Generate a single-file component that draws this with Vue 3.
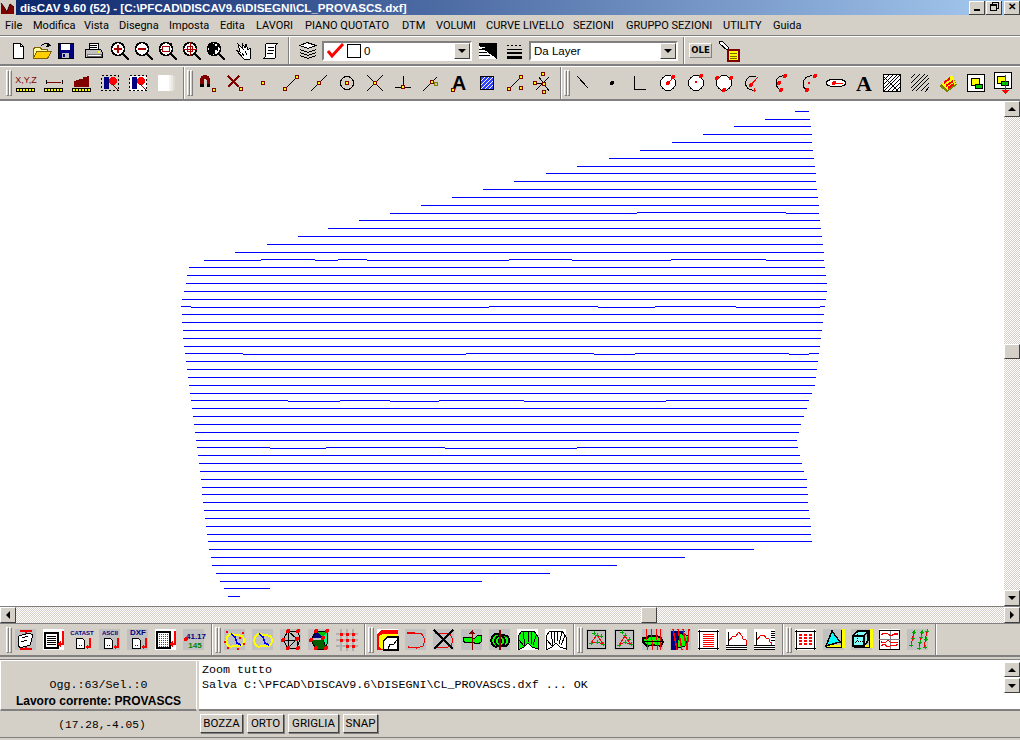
<template>
  <div class="app">
    <div class="titlebar">
      <svg class="logo" viewBox="0 0 16 15" v-html="logo"></svg>
      <span class="title">disCAV 9.60 (52) - [C:\PFCAD\DISCAV9.6\DISEGNI\CL_PROVASCS.dxf]</span>
      <div class="winbtns">
        <span class="winbtn"><i class="w-min"></i></span>
        <span class="winbtn"><i class="w-res"></i></span>
        <span class="winbtn close">✕</span>
      </div>
    </div>

    <div class="menubar">
      <span v-for="m in menu" :key="m">{{ m }}</span>
    </div>
    <div class="rule"></div>

    <div class="band band1">
      <div class="group g-file">
        <span v-for="b in band1a" :key="b.i" class="btn24" :class="b.c"><svg viewBox="0 0 24 24" v-html="icons[b.i]"></svg></span>
      </div>
      <div class="group g-layer">
        <span class="btn24"><svg viewBox="0 0 24 24" v-html="icons.layers"></svg></span>
        <div class="combo c-layer">
          <svg class="check" viewBox="0 0 20 16"><path d="M2 8l4 5L17 1" fill="none" stroke="#f00" stroke-width="3"/></svg>
          <span class="swatch"></span>
          <span class="combo-text">0</span>
          <span class="drop"><i></i></span>
        </div>
        <span class="btn24 next"><svg viewBox="0 0 24 24" v-html="icons.ltype"></svg></span>
        <span class="btn24 tight"><svg viewBox="0 0 24 24" v-html="icons.lwidth"></svg></span>
        <div class="combo c-type">
          <span class="combo-text">Da Layer</span>
          <span class="drop"><i></i></span>
        </div>
      </div>
      <div class="group g-ole">
        <span class="ole">OLE</span>
        <span class="btn24"><svg viewBox="0 0 24 24" v-html="icons.pin"></svg></span>
      </div>
    </div>
    <div class="rule"></div>

    <div class="band band2">
      <div v-for="(g, n) in band2" :key="n" class="group tools">
        <span class="grip"></span><span class="grip"></span>
        <span v-for="i in g" :key="i" class="btn28"><svg viewBox="0 0 24 24" v-html="icons[i]"></svg></span>
      </div>
    </div>

    <div class="work">
      <svg class="canvas" viewBox="0 101 1004 505">
        <rect v-for="(s, n) in segments" :key="n" :x="s[1]" :y="s[0]" :width="s[2] - s[1]" height="1" fill="#0000ff"/>
      </svg>
      <div class="vscroll">
        <span class="sbtn"><i class="up"></i></span>
        <span class="vthumb"></span>
        <span class="sbtn"><i class="down"></i></span>
      </div>
    </div>

    <div class="hscroll">
      <span class="sbtn"><i class="left"></i></span>
      <span class="hthumb"></span>
      <span class="sbtn"><i class="right"></i></span>
    </div>

    <div class="band band3">
      <div v-for="(g, n) in band3" :key="n" class="group tools">
        <span class="grip"></span><span class="grip"></span>
        <span v-for="i in g" :key="i" class="btn28"><svg viewBox="0 0 24 24" v-html="icons[i]"></svg></span>
      </div>
    </div>
    <div class="rule low"></div>

    <div class="status">
      <div class="info">
        <div class="mono">Ogg.:63/Sel.:0</div>
        <div class="job">Lavoro corrente: PROVASCS</div>
      </div>
      <div class="log">
        <div class="mono">Zoom tutto</div>
        <div class="mono">Salva C:\PFCAD\DISCAV9.6\DISEGNI\CL_PROVASCS.dxf ... OK</div>
        <div class="logscroll">
          <span class="sbtn"><i class="up"></i></span>
          <span class="sbtn"><i class="down"></i></span>
        </div>
      </div>
    </div>

    <div class="bottom">
      <div class="coord mono">(17.28,-4.05)</div>
      <div class="modes">
        <span v-for="b in modes" :key="b" class="mode">{{ b }}</span>
      </div>
    </div>
  </div>
</template>

<script setup>
const menu = ['File', 'Modifica', 'Vista', 'Disegna', 'Imposta', 'Edita', 'LAVORI', 'PIANO QUOTATO', 'DTM', 'VOLUMI', 'CURVE LIVELLO', 'SEZIONI', 'GRUPPO SEZIONI', 'UTILITY', 'Guida']
const modes = ['BOZZA', 'ORTO', 'GRIGLIA', 'SNAP']

const band1a = [
  { i: 'new' }, { i: 'open' }, { i: 'save' }, { i: 'print', c: 'm4' },
  { i: 'zin', c: 'm2' }, { i: 'zout' }, { i: 'zwin' }, { i: 'zall' }, { i: 'zprev' },
  { i: 'hand', c: 'm4' }, { i: 'scroll', c: 'm3' }
]

const band2 = [
  ['xyz', 'dist', 'area', 'sel1', 'sel2', 'fade'],
  ['magnet', 'snapx', 'snapdot', 'snapline', 'snapmid', 'snapcen', 'snapint', 'snapperp', 'snaptan', 'snaptext', 'snaphatch', 'snaptwo', 'snapmulti'],
  ['line', 'point', 'angle', 'c1', 'c2', 'c3', 'a1', 'a2', 'a3', 'ell', 'text', 'hatch', 'diag', 'solid', 'ins', 'insdown']
]

const band3 = [
  ['t1', 't2', 'catast', 'ascii', 'dxf', 't6', 'num'],
  ['b1', 'b2', 'tri1', 'tri2', 'gridd'],
  ['cont', 'cv1', 'cv2', 'gr1', 'gr2', 'gr3', 'gr4'],
  ['fr1', 'fr2', 'sec1', 'sec2', 'sec3', 'prof1', 'prof2'],
  ['fr3', 'vol1', 'vol2', 'vol3', 'vol4']
]

const dot = (x, y, r = 2) => `<circle cx="${x}" cy="${y}" r="${r}" fill="#ff0" stroke="#800000"/>`
const rd = (x, y, r = 2) => `<circle cx="${x}" cy="${y}" r="${r}" fill="#f00"/>`
const gn = (x, y) => `<path d="M${x - 2} ${y}h4M${x} ${y - 2}v4" stroke="#0a0" fill="none"/>`
const ln = (d, c = '#000', w = 1) => `<path d="${d}" fill="none" stroke="${c}" stroke-width="${w}"/>`
const grey = '<rect x="1" y="1" width="21" height="21" fill="#c0c0c0"/>'
const white = '<rect x="1" y="1" width="21" height="21" fill="#fff"/>'
const ruler = '<rect x="2.5" y="17.5" width="18" height="3" fill="#ff0" stroke="#000"/>' + ln('M5 18v2M8 18v2M11 18v2M14 18v2M17 18v2')
const cornerRuler = '<path d="M21 1v17H4" fill="none" stroke="#ff0" stroke-width="3"/>' + ln('M19.5 2v17.5H4')
const mag = inner => '<circle cx="10" cy="10" r="6.5" fill="#fff" stroke="#000" stroke-width="1.5"/>' + ln('M15 15l6 6', '#000', 2.5) + inner
const tdoc = (l, cc, bg = '') => bg + `<text x="12" y="7" text-anchor="middle" font-family="Liberation Sans, sans-serif" font-weight="700" font-size="${l.length > 4 ? 6 : 8}" fill="${cc}">${l}</text>` +
  '<path d="M6.5 10.5h6l2 2v8h-8z" fill="#fff" stroke="#000"/>' + '<path d="M9 17h1M11 17h1" stroke="#00f"/>' + ln('M20 10v9h-3', '#f00', 1.5) + '<path d="M15 19l3-3v6z" fill="#f00"/>'
const frame = ln('M2.5 3.5h18v17h-18z', '#000', 1.5) + ln('M1 3.5h3M1 20.5h3M19 3.5h3M19 20.5h3M2.5 2v3M2.5 19v3M20.5 2v3M20.5 19v3')
const blob = 'M4 9c2-4 6-3 8-2s6-1 8 2 1 8-2 9-5-1-7 0-6 1-7-2-1-4 0-7z'

const logo = '<rect width="16" height="15" fill="#d4d0c8"/><path d="M1 14V3l3 4 3 5 3-8 4 3v7z" fill="#800000"/><path d="M1 3l3 4 3 5 3-8 4 3" fill="none" stroke="#300"/>'

const icons = {
  new: '<path d="M7.5 4.5h7l3 3v12h-10z" fill="#fff" stroke="#000"/>' + ln('M14.5 4.5v3h3'),
  open: '<path d="M3.5 19.5v-10l2-1h5l1 2h6v2" fill="#ffff9c" stroke="#806000"/><path d="M3.5 19.5l3-7h15l-4 7z" fill="#ffcf00" stroke="#806000"/>' + ln('M11 7c2-3 6-3 8-1') + '<path d="M18 3l3 4-5 1z" fill="#000"/>',
  save: '<rect x="4" y="4" width="15" height="15" fill="#000080" stroke="#000"/><rect x="7" y="5" width="9" height="6" fill="#fff"/><rect x="8" y="14" width="7" height="5" fill="#c0c0c0"/><rect x="9" y="15" width="2" height="3" fill="#000080"/>',
  print: '<path d="M7.5 4.5h9v6h-9z" fill="#fff" stroke="#000"/><path d="M3.5 10.5h15l2 3v5h-17z" fill="#c0c0c0" stroke="#000"/><rect x="5" y="15" width="14" height="2" fill="#fff" stroke="#000" stroke-width=".5"/><rect x="16" y="12" width="2" height="2" fill="#ff0"/>' + ln('M8 6.5h7M8 8.5h7'),
  zin: mag(ln('M6 10h8M10 6v8', '#a00', 2)),
  zout: mag(ln('M6 10h8', '#a00', 2)),
  zwin: mag(`<rect x="6.5" y="7.5" width="7" height="5" fill="none" stroke="#a00"/>` + ln('M4 10h2M13 5l3-1', '#000')),
  zall: mag(ln('M3 10h14M10 3v14', '#a00') + '<circle cx="10" cy="10" r="3" fill="none" stroke="#a00"/>'),
  zprev: mag('<path d="M4.500 10a5.500 5.500 0 0 1 6-5.500v11a5.500 5.500 0 0 1-6-5.500z" fill="#000"/><path d="M9 9l6-4-1 7z" fill="#000"/>'),
  hand: '<path d="M6 5l5 5-1-6 3 5 1-4 2 6 2-2 1 5-1 6h-6l-8-9 4 2z" fill="#fff" stroke="#000"/>' + ln('M10 14l2 3M13 12l2 4'),
  scroll: '<path d="M8.500 4.500h10l-2 2v11c0 1-1 2-2 2h-10l2-2v-11c0-1 1-2 2-2z" fill="#fff" stroke="#000"/>' + ln('M9 8h6M9 11h6M8 14h6'),
  layers: '<path d="M4 6.500l7-3 9 3-8 3z" fill="#fff" stroke="#000"/><path d="M4 10.500l8 3 8-3M4 13.500l8 3 8-3M4 16.500l8 3 8-3" fill="none" stroke="#000"/>',
  ltype: '<rect x="3" y="4" width="18" height="16" fill="#000"/><path d="M3 7l18 13H3z" fill="#fff"/>' + ln('M3 10h6M3 13h8M3 16h11', '#000') + ln('M5 8h4M7 12h4M9 15h4', '#fff'),
  lwidth: ln('M4 6.500h2M8 6.500h2M12 6.500h2M16 6.500h2', '#000') + ln('M4 10.500h15', '#000') + ln('M4 14h15', '#000', 2) + ln('M4 18h15', '#000', 3),
  pin: '<rect x="11" y="11" width="11" height="11" fill="#ff0" stroke="#800000" stroke-width="1.500"/>' + ln('M13 14.500h7M13 17h7M13 19.500h7', '#806000') + '<path d="M2 3l3-1 7 7-2 2-7-6z" fill="#fff" stroke="#000"/>',

  xyz: '<text x="12" y="12" text-anchor="middle" font-family="Liberation Sans, sans-serif" font-size="9" fill="#800000">X,Y,Z</text>' + ruler,
  dist: ln('M5 11h14', '#800000') + ln('M4 9v4M20 9v4', '#000') + ruler,
  area: '<path d="M4 16v-6l6-2h3v-2h4v-1h2v11z" fill="#800000"/>' + ruler,
  sel1: '<rect x="3.500" y="4.500" width="17" height="15" fill="#d4d0c8" stroke="#000" stroke-dasharray="2 2"/><rect x="6" y="6" width="5" height="12" fill="#000080"/>' + rd(15, 10, 4) + ln('M14 13l6 6', '#800000'),
  sel2: '<rect x="3.500" y="4.500" width="17" height="15" fill="#fff" stroke="#000" stroke-dasharray="2 2"/><rect x="6" y="6" width="5" height="12" fill="#000080"/>' + rd(15, 10, 4) + ln('M14 13l6 6', '#800000'),
  fade: '<rect x="4" y="4" width="11" height="16" fill="#fff"/><rect x="15" y="4" width="2" height="16" fill="#f4f2ee"/><rect x="17" y="4" width="2" height="16" fill="#ebe8e2"/><rect x="19" y="5" width="2" height="14" fill="#dedbd4"/>',

  magnet: '<path d="M5 15V9a5 5 0 0 1 10 0v6h-3.500V9a1.500 1.500 0 0 0-3 0v6z" fill="#800000"/><rect x="5" y="13" width="3.500" height="3" fill="#000"/><rect x="11.500" y="13" width="3.500" height="3" fill="#000"/>' + dot(19, 19),
  snapx: ln('M5 5l11 11M16 5L5 16', '#800000', 2.500) + dot(18, 18),
  snapdot: dot(12, 12),
  snapline: ln('M5 19L19 5') + dot(6, 18) + dot(18, 6),
  snapmid: ln('M4 20L20 4') + dot(12, 12),
  snapcen: '<circle cx="12" cy="12" r="6.500" fill="none" stroke="#000"/>' + dot(12, 12),
  snapint: ln('M4 4l16 16M20 4L4 20') + dot(12, 12),
  snapperp: ln('M12 5v11M4 16h16') + dot(12, 16),
  snaptan: ln('M4 20L18 6') + dot(13, 11) + '<circle cx="17" cy="13" r="2" fill="#c8c8a0" stroke="#808000"/>',
  snaptext: `<text x="12" y="19" text-anchor="middle" font-family="Liberation Sans, sans-serif" font-weight="700" font-size="20" fill="#000">A</text>` + dot(6, 19),
  snaphatch: '<rect x="5.500" y="5.500" width="13" height="13" fill="#3344ff" stroke="#000"/>' + ln('M6 10l4-4M6 14l8-8M6 18L18 6M10 18l8-8M14 18l4-4', '#fff', 1),
  snaptwo: ln('M5 19L17 7') + dot(6, 18) + dot(18, 6) + dot(18, 17),
  snapmulti: ln('M8 6l10 14M18 6L5 19M3 12h8') + dot(12, 3) + dot(4, 12) + dot(13, 13) + dot(13, 21),

  line: ln('M5 5l11 12'),
  point: '<circle cx="12" cy="12" r="2" fill="#000"/>',
  angle: ln('M6.500 5v13.500H18'),
  c1: '<circle cx="12" cy="12" r="7.500" fill="#fff" stroke="#000"/>' + ln('M12 12l5-5', '#f00') + rd(12, 12) + rd(17, 6),
  c2: '<circle cx="12" cy="12" r="7.500" fill="#fff" stroke="#000"/>' + rd(17, 5) + '<circle cx="12" cy="11" r="1.500" fill="#f00"/>',
  c3: '<circle cx="12" cy="12" r="7.500" fill="#fff" stroke="#000"/>' + rd(5, 7) + rd(19, 7) + rd(12, 19),
  a1: ln('M16 6a7 7 0 1 0-2 13') + ln('M11 14l7-8', '#f00') + rd(11, 14) + ln('M13 19h3M14.500 17v4', '#f00'),
  a2: ln('M16 5a7 7 0 1 0-2 14') + rd(11, 12) + rd(17, 5) + rd(13, 19),
  a3: ln('M16 5a8 8 0 0 0-9 8c0 3 2 5 4 6') + rd(19, 5) + rd(11, 19) + '<circle cx="13" cy="12" r="1" fill="#f00"/>',
  ell: '<ellipse cx="12" cy="12" rx="10" ry="4" fill="#fff" stroke="#000"/>' + ln('M10 12h9', '#f00') + rd(10, 12),
  text: `<text x="12" y="20" text-anchor="middle" font-family="Liberation Serif, serif" font-weight="700" font-size="22" fill="#000">A</text>`,
  hatch: '<rect x="3.500" y="3.500" width="17" height="17" fill="#fff" stroke="#000"/>' + ln('M4 9l5-5M4 13l9-9M4 17L17 4M4 20L20 4M8 20L20 8M12 20l8-8M16 20l4-4M4 6l14 14'),
  diag: ln('M3 12l9-9M3 17L17 3M4 20L20 4M8 20L21 7M13 20l8-8M17 21l4-5M3 7l4-4'),
  solid: '<path d="M3 15L16 4l5 10-10 7z" fill="#808000"/><path d="M5 13L16 4l4 9-9 6z" fill="#ff0"/>' + ln('M8 12l6-5M10 15l7-5M12 17l6-4', '#f00', 2),
  ins: '<rect x="3.500" y="3.500" width="17" height="17" fill="#fff" stroke="#000" stroke-width="1.500"/><rect x="7" y="7" width="8" height="7" fill="#ff0" stroke="#000"/><rect x="11" y="13" width="7" height="4" fill="#0c0" stroke="#000"/>',
  insdown: '<rect x="2.500" y="1.500" width="17" height="16" fill="#fff" stroke="#000" stroke-width="1.500"/><rect x="5" y="5" width="8" height="7" fill="#ff0" stroke="#000"/><rect x="9" y="10" width="7" height="4" fill="#0c0" stroke="#000"/>' + ln('M13 4v17', '#f00') + '<path d="M10 19h7l-3.500 4z" fill="#f00"/>',

  t1: grey + ln('M6 3h12M12 3v18M6 21h12', '#e00', 2.500) + '<path d="M5 8l10-3 4 2-3 10-10 3-2-3z" fill="#fff" stroke="#000"/>' + ln('M8 10l6-2M7 14l6-2'),
  t2: white + '<rect x="3" y="5" width="13" height="15" fill="#fff" stroke="#000" stroke-width="1.500"/>' + ln('M5 8h9M5 10h9M5 12h9M5 14h9M5 16h9') + ln('M21 3v13h-3', '#f00', 1.500) + '<path d="M15 16l4-3v6z" fill="#f00"/>',
  catast: tdoc('CATAST', '#000080'),
  ascii: tdoc('ASCII', '#000080', grey),
  dxf: tdoc('DXF', '#000080', grey),
  t6: white + '<rect x="3" y="4" width="13" height="16" fill="#fff" stroke="#000" stroke-width="1.500"/>' + '<path d="M5 6h9M5 8h9M5 10h9M5 12h9M5 14h9M5 16h9M5 18h9" stroke="#f00" stroke-dasharray="1 1"/>' + ln('M21 3v13h-3', '#f00', 1.500) + '<path d="M15 16l4-3v6z" fill="#f00"/>',
  num: grey + '<text x="14" y="11" text-anchor="middle" font-family="Liberation Sans, sans-serif" font-weight="700" font-size="8" fill="#000080">41.17</text><text x="13" y="20" text-anchor="middle" font-family="Liberation Sans, sans-serif" font-weight="700" font-size="8" fill="#008000">145</text>' + rd(4, 11, 2),

  b1: grey + `<path d="${blob}" fill="none" stroke="#ff0" stroke-width="2"/>` + ln('M8 6l4 3 2 6 4 2', '#00f', 1.500) + rd(4, 4, 1) + rd(20, 5, 1) + rd(2, 14, 1) + rd(5, 20, 1) + rd(15, 21, 1) + rd(21, 16, 1) + rd(17, 10, 1),
  b2: grey + `<path d="${blob}" fill="none" stroke="#ff0" stroke-width="2"/>` + ln('M8 6l4 3 2 6 4 2', '#00f', 1.500),
  tri1: grey + ln('M4 12L9 3h10l2 8-3 9H9zM9 3l9 8-9 9V3zM4 12h14M18 11v9') + rd(9, 3) + rd(19, 3) + rd(4, 12) + rd(18, 11) + rd(9, 20) + rd(19, 20),
  tri2: grey + '<path d="M4 12L9 3l7 7H4z" fill="#000080"/><path d="M9 3h11L16 10z" fill="#00c000"/><path d="M4 12h12l3 9H9z" fill="#006000"/><path d="M16 10l4-7 1 8-2 10z" fill="#00ff80"/>' + ln('M4 12L9 3h11l1 8-2 10H9zM16 10l3 11') + rd(9, 3) + rd(20, 3) + rd(4, 12) + rd(16, 10) + rd(9, 20) + rd(19, 20),
  gridd: '<path d="M1 6h22M1 12h22M1 18h22M6 1v22M12 1v22M18 1v22" stroke="#b0b0b0" stroke-width="1.500" fill="none"/><path d="M5 5h3v3H5zM11 5h3v3h-3zM17 5h3v3h-3zM5 11h3v3H5zM11 11h3v3h-3zM17 11h3v3h-3zM11 17h3v3h-3zM17 17h3v3h-3z" fill="#f00"/>',

  cont: white + '<path d="M1 22V6l4-4h17v20H6z" fill="#f00"/><path d="M3 19V8l4-2h15v16H8z" fill="#ff0"/><path d="M7.500 22v-9l4-4h10.500v13z" fill="#fff" stroke="#000" stroke-width="1.500"/>' + '<path d="M12 21l2-5h4l2-3 2-1" stroke="#000" fill="none"/>',
  cv1: grey + ln('M3 5h7l8 1 3 6-2 6-6 2-9-1', '#e00', 1.200),
  cv2: grey + ln('M3 5h7l8 1 3 6-2 6-6 2-9-1', '#e00') + ln('M2 2l19 19M21 2L2 21', '#000', 2),
  gr1: grey + '<path d="M4 9h6l2 1 3 0 3-3h3v7l-3 2-7-2-6 1-2-3z" fill="#0f0" stroke="#000"/>' + ln('M12 2v20', '#800000') + '<path d="M9 6l3-4 3 4z" fill="#800000"/>',
  gr2: grey + `<path d="${blob}" fill="#0f0" stroke="#000" stroke-width="2"/><ellipse cx="12" cy="13" rx="5" ry="5" fill="none" stroke="#000" stroke-width="2"/><ellipse cx="12" cy="13" rx="2" ry="2" fill="none" stroke="#000"/>` + ln('M12 2v20', '#800000', 1.500),
  gr3: white + `<path d="M2 22V8l4-5h12l4 6v12l-6-2-4-4-4 4-6 3z" fill="#0f0" stroke="#000"/>` + ln('M7 4l2 14M12 3v11M16 4l-1 12M20 8l-3 9M3 12l5 6'),
  gr4: white + `<path d="M2 20V8l4-5h12l4 6v12l-6-2-4-4-4 4-6 3z" fill="#fff" stroke="#000"/>` + ln('M7 4l2 14M10 3l1 12M14 3l-1 10M18 4l-3 12M21 8l-4 9M3 12l5 6'),

  fr1: grey + ln('M2.500 2.500h18v18h-18z', '#000', 1.500) + ln('M6 15l6-8 6 9-6-2-6 1', '#e00') + gn(6, 15) + gn(12, 7) + gn(18, 16) + gn(9, 5) + gn(16, 8) + gn(12, 14),
  fr2: grey + ln('M2.500 2.500h18v18h-18z', '#000', 1.500) + ln('M6 17l6-9 6 9-6-3-6 3', '#e00') + gn(6, 17) + gn(12, 7) + gn(18, 16) + gn(9, 4) + gn(16, 11) + gn(12, 14),
  sec1: grey + `<path d="M2 10h4l2-2h8l4 2 2 4-2 4-8-1-6 1-4-4z" fill="#0f0" stroke="#000" stroke-width="1.500"/>` + ln('M5 1l2 21M10 1l2 21M15 1l2 21M20 1l-1 21', '#f00') + ln('M3 13h18', '#000'),
  sec2: grey + '<path d="M2 3h14L8 22H2z" fill="#000080"/><path d="M10 5l10 3-4 10-8 2z" fill="#0f0" stroke="#000"/>' + ln('M4 1l4 21M9 1l4 21M14 1l4 21M20 1l-2 21', '#f00', 1.500),
  sec3: white + frame + ln('M6 6.500h11M6 8.500h11M6 10.500h11M6 12.500h11M6 14.500h11M6 16.500h11M6 18.500h11', '#f00', 1),
  prof1: white + ln('M3 14l5-6 3 0 3-4 3 4 1 3 3 1v5', '#e00') + ln('M3 4v14') + ln('M1 17.500h21M1 19.500h21M1 21.500h21'),
  prof2: white + ln('M3 13l5-6 3 0 2 3 3 1 1 3 1 0v4', '#e00') + ln('M3 4v14') + ln('M18 3h4M18 5h4M18 7h4M18 9h4M18 12h4') + ln('M1 17.500h21M1 19.500h21M1 21.500h21'),

  fr3: white + frame + '<path d="M6.500 6v12M11.500 6v12M16.500 6v12" stroke="#f00" stroke-width="3" stroke-dasharray="2 1" fill="none"/>',
  vol1: grey + cornerRuler + '<path d="M10 3l8 11-14 4z" fill="#00ffff" stroke="#000" stroke-width="1.500"/>',
  vol2: grey + cornerRuler + '<path d="M3 8h11v10H3zM3 8l4-5h11l-4 5M18 3v10l-4 5" fill="#80ffff" stroke="#000" stroke-width="1.200"/>' + '<path d="M7 4v9h11M7 13l-4 4" fill="none" stroke="#000" stroke-dasharray="1 1"/>',
  vol3: white + '<rect x="1.500" y="2.500" width="20" height="19" fill="none" stroke="#000" stroke-width="1.500"/>' + ln('M1 11h21M12 3v18', '#808080') + ln('M3 7l3-2 4 1 3 2 3-2 4 0M3 14l4 1 3-3 3 3 3-1 4 1M3 18l3-2 4 3 4-2 3 1 3-2', '#e00', 1.200),
  vol4: grey + ln('M5 18L8 3M13 21L16 3M18 19L21 3', '#e00') + gn(5, 17) + gn(8, 4) + gn(7, 10) + gn(13, 20) + gn(16, 4) + gn(14, 14) + gn(15, 9) + gn(19, 19) + gn(21, 3) + gn(20, 11)
}

// page rows: [y, x1, x2], rows that step one pixel are split in parts
const segments = [
  [111, 795, 809], [119, 765, 810], [126, 734, 811], [134, 703, 812], [142, 672, 812], [150, 640, 813],
  [158, 609, 814], [166, 577, 815], [173, 546, 816], [181, 514, 816], [189, 483, 817], [197, 452, 818], [205, 421, 819],
  [213, 390, 637], [212, 637, 786], [213, 786, 819],
  [220, 359, 820], [228, 328, 821], [236, 298, 822], [244, 267, 823], [252, 235, 824],
  [260, 204, 261], [259, 261, 315], [260, 315, 338], [259, 338, 367], [260, 367, 509], [259, 509, 572], [260, 572, 671], [259, 671, 766], [260, 766, 824],
  [267, 189, 825], [275, 187, 826], [283, 186, 827], [291, 184, 827], [299, 182, 826],
  [306, 181, 191], [307, 191, 489], [306, 489, 598], [307, 598, 655], [306, 655, 736], [307, 736, 820], [306, 820, 825],
  [314, 182, 824], [322, 182, 823], [330, 183, 822], [338, 183, 821], [346, 184, 820],
  [353, 185, 243], [354, 243, 466], [353, 466, 594], [354, 594, 635], [353, 635, 789], [354, 789, 809], [353, 809, 819],
  [361, 186, 818], [369, 187, 817], [377, 188, 816], [385, 189, 815], [393, 190, 812],
  [400, 191, 288], [401, 288, 340], [400, 340, 390], [401, 390, 439], [400, 439, 524], [401, 524, 666], [400, 666, 809],
  [408, 192, 807], [416, 193, 804], [424, 194, 801], [432, 195, 799], [440, 196, 797],
  [447, 197, 270], [448, 270, 326], [447, 326, 445], [448, 445, 577], [447, 577, 798],
  [455, 198, 800], [463, 199, 802], [471, 200, 804], [479, 201, 807], [487, 202, 807], [494, 202, 808], [502, 203, 808],
  [510, 204, 809], [518, 205, 810], [526, 206, 811], [534, 207, 811], [541, 208, 812], [549, 209, 754], [557, 211, 685],
  [565, 212, 617], [573, 216, 550], [581, 220, 482], [588, 224, 270], [596, 228, 240]
]
</script>

<style>
body { background: #d4d0c8; overflow: hidden; }
</style>

<style scoped>
.app {
  width: 1020px;
  height: 740px;
  display: flex;
  flex-direction: column;
  background: #d4d0c8;
  color: #000;
  font-family: "Liberation Sans", sans-serif;
  font-size: 11px;
  overflow: hidden;
}
.titlebar {
  height: 15px;
  flex: none;
  display: flex;
  align-items: center;
  background: linear-gradient(90deg, #0a246a, #a6caf0);
  position: relative;
}
.logo { width: 16px; height: 15px; flex: none; }
.title {
  margin-left: 4px;
  color: #fff;
  font-weight: 700;
  font-size: 11.6px;
  white-space: nowrap;
}
.winbtns { margin-left: auto; display: flex; gap: 1px; }
.winbtn {
  width: 15px;
  height: 13px;
  background: #d4d0c8;
  border-right: 1px solid #404040;
  border-bottom: 1px solid #404040;
  box-shadow: inset 1px 1px 0 #fff;
  display: flex;
  align-items: center;
  justify-content: center;
  box-sizing: content-box;
  font-size: 10px;
  font-weight: 700;
  line-height: 1;
}
.winbtn.close { margin-left: 1px; }
.w-min { width: 6px; height: 2px; background: #000; margin-top: 6px; }
.w-res { width: 5px; height: 4px; border: 1px solid #000; border-top-width: 2px; box-shadow: 2px -2px 0 -1px #d4d0c8, 2px -2px 0 0 #000; }

.menubar {
  height: 20px;
  flex: none;
  display: grid;
  grid-template-columns: 28px 51px 35px 50px 51px 36px 49px 97px 34px 50px 87px 53px 97px 50px 40px;
  align-items: center;
  padding-left: 5px;
  font-family: Roboto, sans-serif;
  white-space: nowrap;
}
.rule {
  height: 2px;
  flex: none;
  box-sizing: border-box;
  border-top: 1px solid #808080;
  border-bottom: 1px solid #fff;
}
.rule.low { margin-top: 2px; }

.band { display: flex; flex: none; }
.band1 { height: 28px; border-bottom: 1px solid #808080; box-sizing: border-box; }
.band2 { height: 34px; border-bottom: 2px solid #808080; box-sizing: border-box; padding-left: 3px; }
.band3 { height: 33px; border-bottom: 2px solid #808080; box-sizing: border-box; padding-left: 3px; }
.group {
  display: flex;
  align-items: center;
  border-right: 1px solid #808080;
  box-shadow: 1px 0 0 #fff;
}
.tools { padding: 0 3px; }
.g-file { padding: 0 5px 0 6px; }
.g-layer { padding: 0 5px 0 6px; margin-left: 1px; }
.g-ole { padding-left: 4px; margin-left: 1px; border-right: 0; box-shadow: none; }
.btn24 { width: 24px; height: 24px; flex: none; }
.btn28 { width: 28px; height: 28px; flex: none; display: flex; align-items: center; justify-content: center; }
.btn24 svg, .btn28 svg { width: 24px; height: 24px; display: block; shape-rendering: crispEdges; overflow: visible; }
.m2 { margin-left: 2px; }
.m3 { margin-left: 3px; }
.m4 { margin-left: 4px; }
.next { margin-left: 4px; }
.tight { margin-left: 3px; }
.grip {
  width: 1px;
  height: 24px;
  flex: none;
  box-sizing: content-box;
  border-left: 1px solid #fff;
  border-top: 1px solid #fff;
  border-right: 1px solid #808080;
  border-bottom: 1px solid #808080;
}

.combo {
  height: 20px;
  box-sizing: border-box;
  background: #fff;
  border: 2px solid;
  border-color: #808080 #fff #fff #808080;
  display: flex;
  align-items: center;
  position: relative;
  font-size: 11.5px;
}
.c-layer { width: 150px; margin-left: 2px; }
.c-type { width: 149px; margin-left: 2px; padding-left: 3px; }
.check { width: 20px; height: 16px; margin-left: 2px; flex: none; }
.swatch { width: 14px; height: 14px; border: 1px solid #000; box-sizing: border-box; margin-left: 1px; flex: none; }
.combo-text { margin-left: 3px; }
.c-type .combo-text { margin-left: 0; }
.drop {
  margin-left: auto;
  width: 16px;
  height: 16px;
  background: #d4d0c8;
  box-sizing: border-box;
  border: 1px solid;
  border-color: #fff #404040 #404040 #fff;
  display: flex;
  align-items: center;
  justify-content: center;
}
.drop i {
  width: 0;
  height: 0;
  border-style: solid;
  border-width: 4px 4px 0;
  border-color: #000 transparent transparent;
}
.ole {
  width: 21px;
  height: 13px;
  background: #d4d0c8;
  border: 1px solid;
  border-color: #fff #808080 #808080 #fff;
  font-family: "DejaVu Sans", sans-serif;
  font-weight: 700;
  font-size: 8.5px;
  line-height: 13px;
  text-align: center;
  margin-right: 5px;
}

.work { flex: none; height: 505px; display: flex; background: #fff; }
.canvas { width: 1004px; height: 505px; display: block; flex: none; shape-rendering: crispEdges; }
.vscroll {
  width: 16px;
  flex: none;
  display: flex;
  flex-direction: column;
  align-items: stretch;
  background: repeating-conic-gradient(#fff 0 25%, #d4d0c8 0 50%) 0 0 / 2px 2px;
}
.vthumb {
  width: 16px;
  height: 15px;
  margin-top: 227px;
  margin-bottom: auto;
  box-sizing: border-box;
  background: #d4d0c8;
  border: 1px solid;
  border-color: #fff #404040 #404040 #fff;
}
.sbtn {
  width: 16px;
  height: 16px;
  flex: none;
  box-sizing: border-box;
  background: #d4d0c8;
  border: 1px solid;
  border-color: #fff #404040 #404040 #fff;
  display: flex;
  align-items: center;
  justify-content: center;
}
.sbtn i { width: 0; height: 0; border-style: solid; }
.sbtn .up { border-width: 0 4px 4px; border-color: transparent transparent #000; }
.sbtn .down { border-width: 4px 4px 0; border-color: #000 transparent transparent; }
.sbtn .left { border-width: 4px 4px 4px 0; border-color: transparent #000 transparent transparent; }
.sbtn .right { border-width: 4px 0 4px 4px; border-color: transparent transparent transparent #000; }

.hscroll {
  height: 18px;
  flex: none;
  box-sizing: border-box;
  border-top: 1px solid #808080;
  border-bottom: 1px solid #808080;
  display: flex;
  background: repeating-conic-gradient(#fff 0 25%, #d4d0c8 0 50%) 0 0 / 2px 2px;
}
.hthumb {
  width: 16px;
  height: 16px;
  margin-left: 625px;
  margin-right: auto;
  box-sizing: border-box;
  background: #d4d0c8;
  border: 1px solid;
  border-color: #fff #404040 #404040 #fff;
}

.status { height: 50px; flex: none; display: flex; gap: 2px; }
.info {
  width: 197px;
  flex: none;
  box-sizing: border-box;
  border-left: 1px solid #fff;
  border-right: 1px solid #fff;
  border-bottom: 2px solid #808080;
  padding-top: 17px;
  display: flex;
  flex-direction: column;
  align-items: center;
}
.mono {
  font-family: "Liberation Mono", monospace;
  font-size: 11.7px;
  line-height: 15px;
  white-space: nowrap;
}
.job { font-weight: 700; font-size: 12px; line-height: 16px; white-space: nowrap; }
.log {
  flex: 1;
  background: #fff;
  box-sizing: border-box;
  border-bottom: 2px solid #808080;
  padding: 2px 3px;
  position: relative;
}
.logscroll {
  position: absolute;
  right: 0;
  top: 1px;
  display: flex;
  flex-direction: column;
  gap: 1px;
}
.logscroll .sbtn { height: 15px; }

.bottom {
  height: 27px;
  flex: none;
  box-sizing: border-box;
  border-bottom: 1px solid #808080;
  display: flex;
  padding-top: 3px;
}
.coord { width: 200px; padding: 4px 0 0 4px; box-sizing: border-box; text-align: center; flex: none; font-size: 11.2px; }
.modes {
  display: grid;
  grid-template-columns: 43px 37px 51px 35px;
  column-gap: 4px;
  height: 19px;
}
.mode {
  box-sizing: border-box;
  border: 1px solid;
  border-color: #fff #404040 #404040 #fff;
  box-shadow: 1px 1px 0 #808080;
  font-family: Roboto, sans-serif;
  font-size: 11.5px;
  line-height: 17px;
  text-align: center;
  white-space: nowrap;
}
</style>
